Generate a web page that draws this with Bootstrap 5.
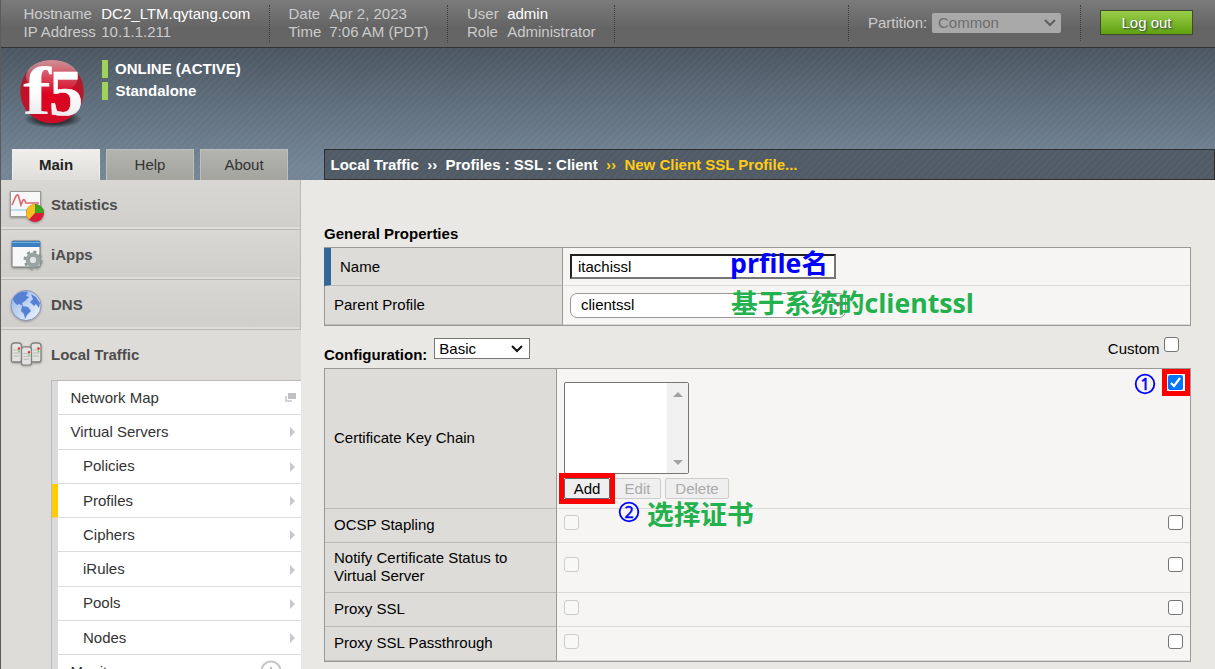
<!DOCTYPE html>
<html lang="en">
<head>
<meta charset="utf-8">
<title>New Client SSL Profile</title>
<link href="https://cdn.jsdelivr.net/npm/bootstrap@5.3.0/dist/css/bootstrap.min.css" rel="stylesheet">
<style>
body{font:15px/18px "Liberation Sans","Noto Sans CJK SC",sans-serif;color:#000;background:#e9e8e4;height:669px;overflow:hidden}
.shell{height:669px;border-left:1px solid #5c5a5a;overflow:hidden}
.topbar{height:48px;background:linear-gradient(#7b7b7b,#646464 60%,#666);border-bottom:1px solid #333;color:#ccc}
.topbar b{font-weight:400;color:#fff}
.facts{display:grid;grid-template-columns:auto 1fr;align-content:start;height:38px;border-right:1px dotted #3c3c3c;margin-top:5px}
.part{height:36px;border:1px dotted #3c3c3c;border-width:0 1px;margin-top:5px;width:233px;padding:0 19px}
.partsel{width:129px;height:20px;background:#a9a9a9;color:#6d6d6d;border-radius:2px;padding:0 4px 0 6px}
.logout{width:93px;height:25px;margin:10px 22px 0 19px;padding:0;border:1px solid #3c4a2c;border-radius:0;background:linear-gradient(#98cd48,#7db82c 50%,#60a010);color:#fff;font-size:15px;line-height:22px;text-shadow:1px 1px 2px #234}
.banner{height:132px;background:repeating-linear-gradient(135deg,#fff0 0 3px,#ffffff07 3px 5px),linear-gradient(#4b5661,#5f6e7c 42%,#748596 90%)}
.status{border-left:6px solid #a0d158;height:18px;line-height:18px;color:#fff;font-weight:700;padding-left:7px}
.tab{width:88px;height:31px;background:linear-gradient(#b3b4ae,#a3a49d);border:1px solid #bfc0bc;border-bottom:0;text-align:center;line-height:30px;color:#333}
.tab.on{background:linear-gradient(#f0efed,#deddd9);font-weight:700;border-color:#eee;color:#222}
.crumb{width:891px;height:31px;background:repeating-linear-gradient(135deg,#fff0 0 3px,#ffffff06 3px 5px),#505b66;border:1px solid #2f2f31;color:#fff;font-weight:700;line-height:30px;padding-left:5.5px;white-space:pre}
.crumb i{font-style:normal;color:#fc1}
.side{width:300px;height:489px;background:#dddcd8;overflow:hidden}
.mod{height:50px;color:#4d4d4d;font-weight:700;border-bottom:1px solid #b9b9b9;border-right:1px solid #b9b9b9;background:linear-gradient(#d8d7d3,#d0cfcb 95%,#dfdedb 95%);padding-left:7px}
.mod.open{border:0;background:none}
.mod svg{width:36px;height:36px;margin-right:7px;flex:none}
.sub{margin-left:50px;border-left:1px solid #b9b9b9;border-top:1px solid #b9b9b9}
.item{height:34.3px;background:#fff;border-left:6px solid #dcdbdb;border-bottom:1px solid #dcdcdc;padding:0 5px 0 12.5px;color:#333}
.item.child{padding-left:25px}
.item.sel{border-left-color:#fc0}
.item.lastone{padding-top:7px}
.tri{border:5px solid #0000;border-left:5px solid #c8c8c8;border-right:0;margin-top:1px;margin-right:1px}
.main{width:867px;margin-left:23px}
.sec{font-weight:700}
.prop{display:grid;border:1px solid #999;background:#f6f5f3}
.g1{grid-template-columns:238px 1fr;grid-template-rows:38px 39px;margin-top:4px}
.g2{grid-template-columns:232px 1fr 29px;grid-template-rows:140px 34px 50px 34px 34px;margin-top:9px}
.prop>div{border-bottom:1px solid #dadada;display:flex;align-items:center}
.prop>.k{background:#dddcd8;border-right:1px solid #999;border-bottom-color:#bbb;padding:0 9px}
.g2>.k{padding-bottom:2px!important}
.prop>.req{border-left:7px solid #369;margin-left:-1px}
.txt{width:266px;height:25px;border:2px solid #767676;border-top-color:#222;border-left-color:#222;background:#fff;padding:2px 6px;margin-left:7px}
.pick{width:276px;height:25px;border:1px solid #999;border-radius:7px;background:#fff;padding:2px 10px;margin-left:7px}
.basic{width:96px;height:21px;background:#fff;border:1px solid #767676;padding:0 5px 0 4px;margin:1px 0 0 7px}
.cb{width:15px;height:15px;border:1.5px solid #757575;border-radius:3px;background:#fff;flex:none;margin:0 7px 4px 7px}
.upper .cb{margin-bottom:6px}
.v .cb{border-color:#ccc;background:#f8f8f7}
.g2>.v.certs{flex-direction:column;align-items:flex-start;padding:13px 0 0 7px}
.list{width:125px;height:92px;border:1px solid #767676;border-radius:2px;background:#fff}
.bar{width:21px;background:#f0f0f0;padding:9px 0 8px}
.up,.dn{width:0;height:0;border:5px solid #0000}
.up{border-top:0;border-bottom-color:#a2a2a2}.dn{border-bottom:0;border-top-color:#a2a2a2}
.mini{height:21px;border:1px solid #ccc;border-radius:2px;background:#efefef;color:#aaa;text-align:center;line-height:19px}
.mini.live{border-color:#666;color:#000}
.note{position:absolute;font:700 26.7px/32px "Open Sans","Noto Sans CJK SC",sans-serif;white-space:nowrap}
.grn{color:#22b14c}.blu{color:#00f}
.frame{position:absolute;border:5px solid #f00}
</style>
<script src="https://cdn.jsdelivr.net/npm/bootstrap@5.3.0/dist/js/bootstrap.bundle.min.js"></script>
</head>
<body>
<div class="shell position-relative">
<header class="topbar d-flex">
  <div class="facts" style="width:269px;padding-left:22.5px;column-gap:5.5px"><span>Hostname</span><b>DC2_LTM.qytang.com</b><span>IP Address</span><span>10.1.1.211</span></div>
  <div class="facts" style="width:178px;padding-left:18.5px;column-gap:8px"><span>Date</span><span>Apr 2, 2023</span><span>Time</span><span>7:06 AM (PDT)</span></div>
  <div class="facts" style="width:167px;padding-left:19px;column-gap:8.5px"><span>User</span><b>admin</b><span>Role</span><span>Administrator</span></div>
  <div class="part ms-auto d-flex align-items-center justify-content-between"><span>Partition:</span><div class="partsel d-flex align-items-center justify-content-between">Common<svg width="14" height="10" viewBox="0 0 14 10"><path d="M2 2l5 5 5-5" fill="none" stroke="#606060" stroke-width="2"/></svg></div></div>
  <button class="btn logout">Log out</button>
</header>
<section class="banner d-flex">
  <div class="d-flex flex-column justify-content-between" style="width:323px">
    <div class="d-flex">
      <svg width="72" height="72" viewBox="0 0 72 72" style="margin:9px 13px 0 16px">
        <defs><radialGradient id="red" cx=".5" cy=".6" r=".6"><stop offset="0" stop-color="#e2001f"/><stop offset=".6" stop-color="#d00a26"/><stop offset="1" stop-color="#9c2530"/></radialGradient><linearGradient id="shine" x2="0" y2="1"><stop stop-color="#fff" stop-opacity=".5"/><stop offset="1" stop-color="#fff" stop-opacity="0"/></linearGradient><radialGradient id="shade"><stop stop-color="#111" stop-opacity=".95"/><stop offset=".6" stop-color="#111" stop-opacity=".6"/><stop offset="1" stop-color="#111" stop-opacity="0"/></radialGradient><linearGradient id="ink" x2="0" y2="1"><stop offset=".5" stop-color="#fff"/><stop offset="1" stop-color="#e0e0e0"/></linearGradient></defs>
        <ellipse cx="36" cy="62" rx="29" ry="9" fill="url(#shade)"/><circle cx="35" cy="34.500" r="31.800" fill="url(#red)"/><ellipse cx="35" cy="20" rx="26" ry="17" fill="url(#shine)"/>
        <g font-family="Liberation Serif" font-weight="700" fill="url(#ink)"><text x="6" y="57" font-size="67" textLength="28" lengthAdjust="spacingAndGlyphs">f</text><text x="32" y="57.500" font-size="65" textLength="34" lengthAdjust="spacingAndGlyphs" stroke="#fff" stroke-width=".6">5</text></g>
      </svg>
      <div><div class="status" style="margin-top:12px">ONLINE (ACTIVE)</div><div class="status" style="margin-top:4px;padding-left:7.5px">Standalone</div></div>
    </div>
    <div class="d-flex" style="gap:6px;padding-left:11px"><div class="tab on">Main</div><div class="tab">Help</div><div class="tab">About</div></div>
  </div>
  <div class="crumb align-self-end">Local Traffic  ››  Profiles : SSL : Client  <i>››  New Client SSL Profile...</i></div>
</section>
<div class="d-flex">
<nav class="side flex-shrink-0">
  <div class="mod d-flex align-items-center"><svg viewBox="0 0 36 36" style="filter:drop-shadow(0 1px 1px #0005)"><rect x="2.500" y="4.500" width="30" height="25" fill="#f8f8f8" stroke="#999"/><path d="M3 23h29" stroke="#bcdcf0" stroke-width="2"/><path d="M4 18l4-9q2-3 3 2l2 7 2-5q1-1 2 1l1 2h13" fill="none" stroke="#dc6770" stroke-width="1.600"/><circle cx="27" cy="26" r="9" fill="#d91c35"/><path d="M27 26V17a9 9 0 0 1 9 9z" fill="#3ca51e"/><path d="M27 26V17a9 9 0 0 0-6 15.500z" fill="#f4c020"/></svg>Statistics</div>
  <div class="mod d-flex align-items-center"><svg viewBox="0 0 36 36" style="filter:drop-shadow(0 1px 1px #0005)"><rect x="4" y="4" width="28" height="26" rx="1" fill="#f8f8f8" stroke="#777"/><path d="M4 4h28v6H4z" fill="#3c80c2"/><path d="M4 5.500h28" stroke="#6db0e2"/><g transform="translate(25 23)"><circle r="8" fill="none" stroke="#8c9897" stroke-width="3" stroke-dasharray="3.140 3.140"/><circle r="5.200" fill="none" stroke="#98a4a2" stroke-width="4.500"/><circle r="3" fill="#e0e4e3"/></g></svg>iApps</div>
  <div class="mod d-flex align-items-center"><svg viewBox="0 0 36 36" style="filter:drop-shadow(0 1px 1px #0004)"><defs><linearGradient id="sea" x2="1" y2="1"><stop stop-color="#8fb0e8"/><stop offset="1" stop-color="#f4f8ff"/></linearGradient></defs><circle cx="18" cy="18.500" r="15" fill="url(#sea)" stroke="#8796b5"/><path d="M5 12C8 6 13 4 20 5l-2 4 3 1-4 4-3 2 1 3-4-2-2 1-3-3zM14 19l6 1 3 4-4 4-2 4-1-5-3-3zM23 7l5 3 4 6-1 5-3-4-2 2-4-4 3-3z" fill="#5580d4"/></svg>DNS</div>
  <div class="mod open d-flex align-items-center"><svg viewBox="0 0 36 36" style="filter:drop-shadow(0 1px 1px #0004)"><defs><g id="srv"><path d="M1 4Q1 1 4 1h4q3 0 3 3v14q0 2-2 2H3q-2 0-2-2z" fill="#e2e2e0" stroke="#808080" stroke-width="1.300"/><path d="M3 8h6M3 11h6M3 14h6" stroke="#b8b8b8"/><circle cx="8.500" cy="6.500" r="1.200" fill="#e22"/><circle cx="8.500" cy="9.500" r=".9" fill="#6c5"/></g></defs><use href="#srv" x="2.500" y="5"/><use href="#srv" x="22" y="5"/><g transform="translate(12.500 9)"><use href="#srv" transform="scale(1 .95)"/></g></svg>Local Traffic</div>
  <div class="sub">
    <div class="item d-flex align-items-center justify-content-between">Network Map<svg width="11" height="9" viewBox="0 0 11 9"><path d="M3 0h8v6H3z" fill="#c0c0c0"/><path d="M1 3v5h6" fill="none" stroke="#c8c8c8" stroke-width="1.500"/></svg></div>
    <div class="item d-flex align-items-center justify-content-between">Virtual Servers<span class="tri"></span></div>
    <div class="item child d-flex align-items-center justify-content-between">Policies<span class="tri"></span></div>
    <div class="item child sel d-flex align-items-center justify-content-between">Profiles<span class="tri"></span></div>
    <div class="item child d-flex align-items-center justify-content-between">Ciphers<span class="tri"></span></div>
    <div class="item child d-flex align-items-center justify-content-between">iRules<span class="tri"></span></div>
    <div class="item child d-flex align-items-center justify-content-between">Pools<span class="tri"></span></div>
    <div class="item child d-flex align-items-center justify-content-between">Nodes<span class="tri"></span></div>
    <div class="item lastone d-flex align-items-start justify-content-between"><span style="padding-top:1px">Monitors</span><svg width="22" height="22" viewBox="0 0 22 22" style="margin:-2px 14px 0 0"><circle cx="11" cy="11" r="9.500" fill="#fff" stroke="#c4c4c4" stroke-width="2"/><path d="M11 7v8M7 11h8" stroke="#bbb" stroke-width="2"/></svg></div>
  </div>
</nav>
<main class="main">
  <div class="sec" style="margin-top:45px">General Properties</div>
  <div class="prop g1">
    <div class="k req">Name</div><div class="v"><div class="txt">itachissl</div></div>
    <div class="k">Parent Profile</div><div class="v"><div class="pick d-flex justify-content-between" style="padding-right:1px">clientssl<span class="dn" style="margin:6px 1px 0 0;border-top-color:#777"></span></div></div>
  </div>
  <div class="d-flex align-items-start" style="margin-top:11px;height:22px">
    <span class="sec" style="padding-top:9px">Configuration:</span>
    <div class="basic d-flex align-items-center justify-content-between">Basic<svg width="14" height="10" viewBox="0 0 14 10"><path d="M2 2l5 5 5-5" fill="none" stroke="#111" stroke-width="2"/></svg></div>
    <span class="ms-auto" style="padding-top:3px">Custom</span><span class="cb" style="margin:0 12px 0 4.500px"></span>
  </div>
  <div class="prop g2">
    <div class="k">Certificate Key Chain</div>
    <div class="v certs">
      <div class="list d-flex justify-content-end"><div class="bar d-flex flex-column align-items-center justify-content-between"><span class="up"></span><span class="dn"></span></div></div>
      <div class="d-flex" style="gap:4px;margin-top:4px"><div class="mini live" style="width:46px">Add</div><div class="mini" style="width:47px">Edit</div><div class="mini" style="width:64px">Delete</div></div>
    </div>
    <div></div>
    <div class="k">OCSP Stapling</div><div class="v upper"><span class="cb"></span></div><div class="upper"><span class="cb"></span></div>
    <div class="k">Notify Certificate Status to Virtual Server</div><div class="v upper"><span class="cb"></span></div><div class="upper"><span class="cb"></span></div>
    <div class="k">Proxy SSL</div><div class="v"><span class="cb"></span></div><div><span class="cb"></span></div>
    <div class="k">Proxy SSL Passthrough</div><div class="v"><span class="cb"></span></div><div><span class="cb"></span></div>
  </div>
</main>
</div>
<!-- tutorial annotations over the form -->
<div class="note blu" style="left:729px;top:247px">prfile名</div>
<div class="note grn" style="left:730px;top:287px">基于系统的clientssl</div>
<div class="note grn" style="left:646px;top:498px">选择证书</div>
<svg class="position-absolute" style="left:617px;top:501px" width="22" height="22" viewBox="0 0 22 22"><circle cx="11" cy="11" r="9.300" fill="none" stroke="#00f" stroke-width="1.800"/><text x="11" y="17" text-anchor="middle" font-family="Noto Sans" font-size="16" stroke="#00f" stroke-width=".5" fill="#00f">2</text></svg>
<svg class="position-absolute" style="left:1133px;top:373px" width="22" height="22" viewBox="0 0 22 22"><circle cx="11" cy="11" r="9.300" fill="none" stroke="#00f" stroke-width="1.800"/><text x="11" y="17" text-anchor="middle" font-family="Noto Sans" font-size="16" stroke="#00f" stroke-width=".5" fill="#00f">1</text></svg>
<div class="frame" style="left:558px;top:473px;width:56px;height:31px"></div>
<div class="frame bg-white" style="left:1161px;top:369px;width:28px;height:27px"><svg class="d-block" width="18" height="17" viewBox="0 0 18 17"><rect x="1" y="1" width="15" height="15" rx="2" fill="#0075ff"/><path d="M4 9l3 3 6-8" fill="none" stroke="#fff" stroke-width="2.200"/></svg></div>
</div>
</body>
</html>
